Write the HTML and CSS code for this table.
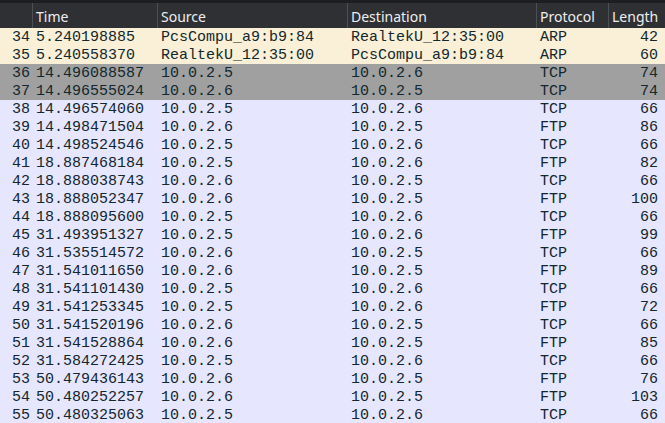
FILE: index.html
```html
<!DOCTYPE html>
<html>
<head>
<meta charset="utf-8">
<link rel="stylesheet" href="styles.css">
</head>
<body>
<div class="list">
  <div class="head">
    <div class="hc"></div>
    <div class="hc">Time</div>
    <div class="hc">Source</div>
    <div class="hc">Destination</div>
    <div class="hc">Protocol</div>
    <div class="hc">Length</div>
  </div>
  <div class="row arp"><span class="no">34</span><span>5.240198885</span><span>PcsCompu_a9:b9:84</span><span>RealtekU_12:35:00</span><span>ARP</span><span class="len">42</span></div>
  <div class="row arp"><span class="no">35</span><span>5.240558370</span><span>RealtekU_12:35:00</span><span>PcsCompu_a9:b9:84</span><span>ARP</span><span class="len">60</span></div>
  <div class="row syn"><span class="no">36</span><span>14.496088587</span><span>10.0.2.5</span><span>10.0.2.6</span><span>TCP</span><span class="len">74</span></div>
  <div class="row syn"><span class="no">37</span><span>14.496555024</span><span>10.0.2.6</span><span>10.0.2.5</span><span>TCP</span><span class="len">74</span></div>
  <div class="row tcp"><span class="no">38</span><span>14.496574060</span><span>10.0.2.5</span><span>10.0.2.6</span><span>TCP</span><span class="len">66</span></div>
  <div class="row tcp"><span class="no">39</span><span>14.498471504</span><span>10.0.2.6</span><span>10.0.2.5</span><span>FTP</span><span class="len">86</span></div>
  <div class="row tcp"><span class="no">40</span><span>14.498524546</span><span>10.0.2.5</span><span>10.0.2.6</span><span>TCP</span><span class="len">66</span></div>
  <div class="row tcp"><span class="no">41</span><span>18.887468184</span><span>10.0.2.5</span><span>10.0.2.6</span><span>FTP</span><span class="len">82</span></div>
  <div class="row tcp"><span class="no">42</span><span>18.888038743</span><span>10.0.2.6</span><span>10.0.2.5</span><span>TCP</span><span class="len">66</span></div>
  <div class="row tcp"><span class="no">43</span><span>18.888052347</span><span>10.0.2.6</span><span>10.0.2.5</span><span>FTP</span><span class="len">100</span></div>
  <div class="row tcp"><span class="no">44</span><span>18.888095600</span><span>10.0.2.5</span><span>10.0.2.6</span><span>TCP</span><span class="len">66</span></div>
  <div class="row tcp"><span class="no">45</span><span>31.493951327</span><span>10.0.2.5</span><span>10.0.2.6</span><span>FTP</span><span class="len">99</span></div>
  <div class="row tcp"><span class="no">46</span><span>31.535514572</span><span>10.0.2.6</span><span>10.0.2.5</span><span>TCP</span><span class="len">66</span></div>
  <div class="row tcp"><span class="no">47</span><span>31.541011650</span><span>10.0.2.6</span><span>10.0.2.5</span><span>FTP</span><span class="len">89</span></div>
  <div class="row tcp"><span class="no">48</span><span>31.541101430</span><span>10.0.2.5</span><span>10.0.2.6</span><span>TCP</span><span class="len">66</span></div>
  <div class="row tcp"><span class="no">49</span><span>31.541253345</span><span>10.0.2.5</span><span>10.0.2.6</span><span>FTP</span><span class="len">72</span></div>
  <div class="row tcp"><span class="no">50</span><span>31.541520196</span><span>10.0.2.6</span><span>10.0.2.5</span><span>TCP</span><span class="len">66</span></div>
  <div class="row tcp"><span class="no">51</span><span>31.541528864</span><span>10.0.2.6</span><span>10.0.2.5</span><span>FTP</span><span class="len">85</span></div>
  <div class="row tcp"><span class="no">52</span><span>31.584272425</span><span>10.0.2.5</span><span>10.0.2.6</span><span>TCP</span><span class="len">66</span></div>
  <div class="row tcp"><span class="no">53</span><span>50.479436143</span><span>10.0.2.6</span><span>10.0.2.5</span><span>FTP</span><span class="len">76</span></div>
  <div class="row tcp"><span class="no">54</span><span>50.480252257</span><span>10.0.2.6</span><span>10.0.2.5</span><span>FTP</span><span class="len">103</span></div>
  <div class="row tcp"><span class="no">55</span><span>50.480325063</span><span>10.0.2.5</span><span>10.0.2.6</span><span>TCP</span><span class="len">66</span></div>
</div>
</body>
</html>
```
FILE: styles.css
```css
html, body {
  margin: 0;
  padding: 0;
  background: #e7e6ff;
  overflow: hidden;
}
.list {
  width: 665px;
  height: 423px;
  overflow: hidden;
  display: flex;
  flex-direction: column;
}
.head {
  display: grid;
  grid-template-columns: 32px 125px 190px 189px 72px 57px;
  height: 25px;
  border-top: 3px solid #1d1e21;
  background: #2e3034;
  font-family: "Noto Sans", sans-serif;
  font-size: 14px;
  color: #eeeeee;
  flex: none;
}
.hc {
  border-left: 1px solid #4c4f54;
  padding-left: 3px;
  padding-top: 2px;
  line-height: 23px;
  white-space: nowrap;
  overflow: hidden;
}
.hc:first-child {
  border-left: none;
}
.row {
  display: grid;
  grid-template-columns: 32px 125px 190px 189px 72px 57px;
  height: 18px;
  box-sizing: border-box;
  padding-top: 2px;
  line-height: 16px;
  font-family: "Liberation Mono", monospace;
  font-size: 15px;
  color: #12272e;
  white-space: pre;
  flex: none;
}
.row span {
  padding-left: 4px;
  overflow: hidden;
}
.row span.no {
  padding-left: 0;
  padding-right: 2px;
  text-align: right;
}
.row span.len {
  padding-left: 0;
  padding-right: 7px;
  text-align: right;
}
.arp { background: #faf0d7; }
.syn { background: #a0a0a0; }
.tcp { background: #e7e6ff; }
```
